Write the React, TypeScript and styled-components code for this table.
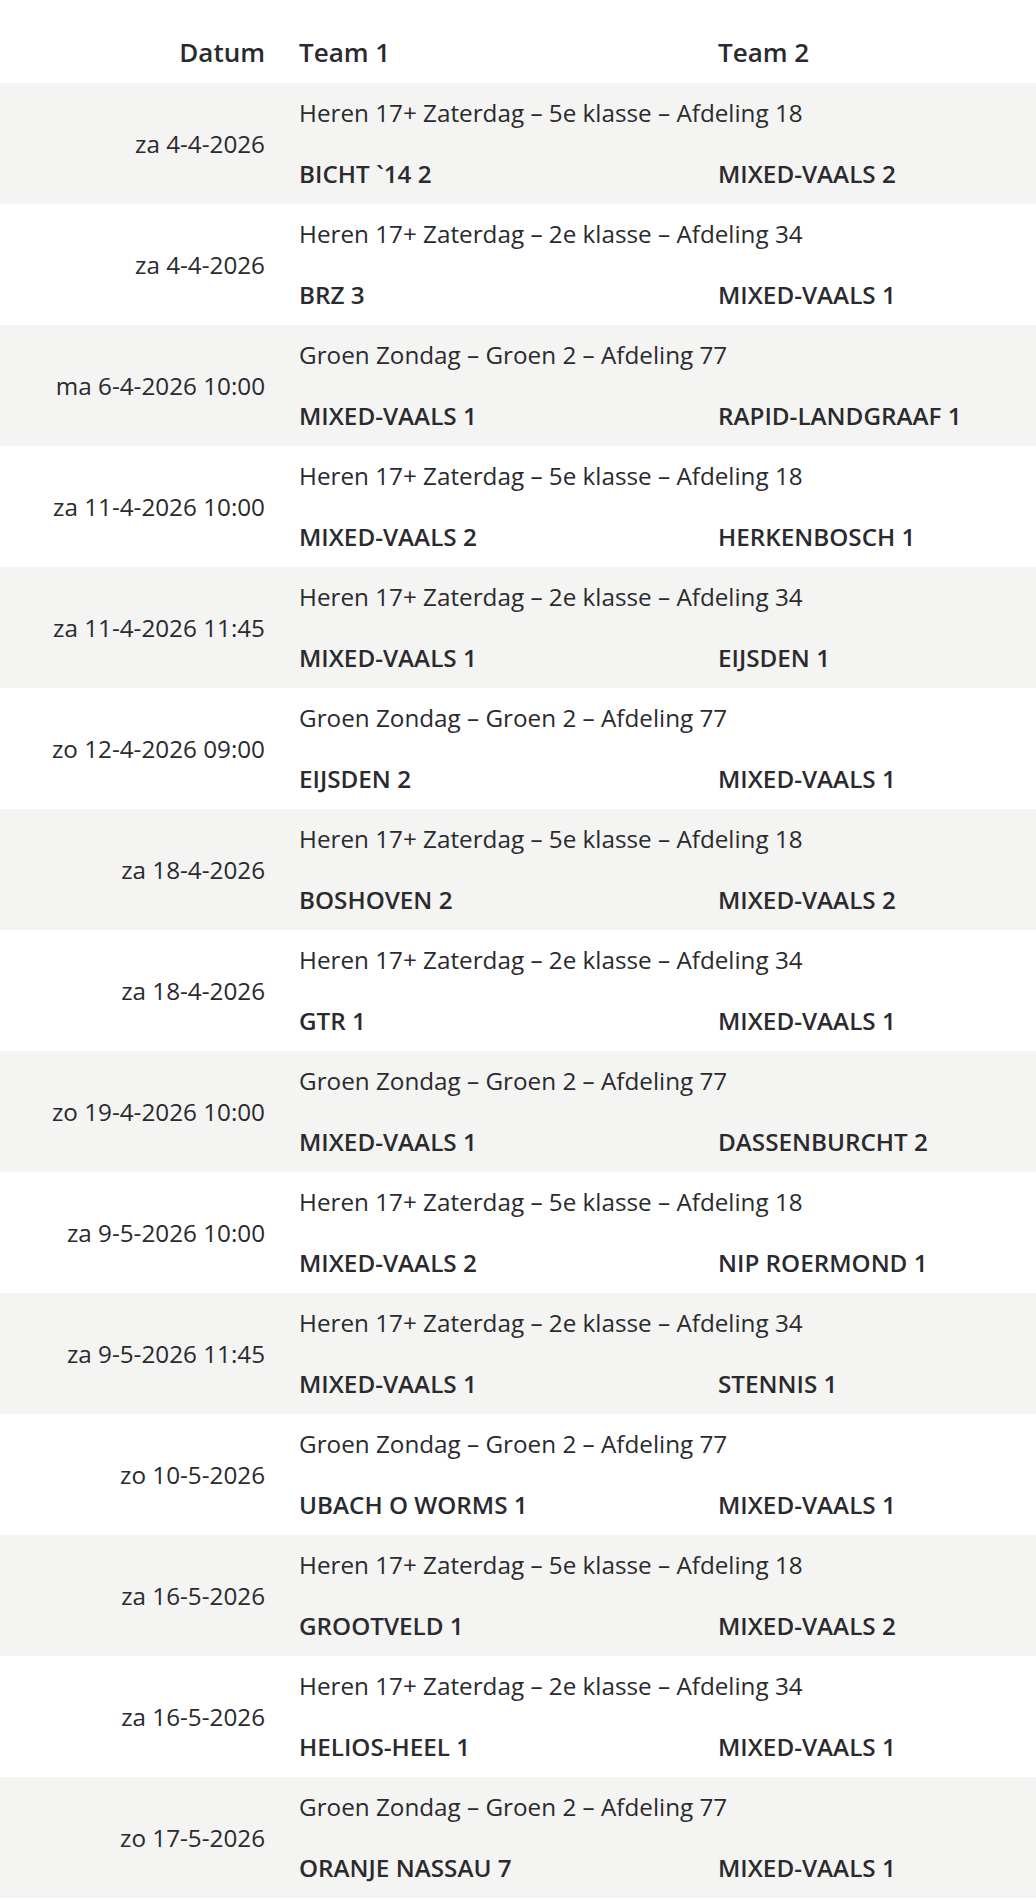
import React from "react";
import styled, { createGlobalStyle } from "styled-components";

const Global = createGlobalStyle`
  html, body { margin: 0; padding: 0; background: #ffffff; }
  body { font-family: "Open Sans", "Noto Sans", sans-serif; color: #2a2a2f; }
`;

type Match = { date: string; cat: string; t1: string; t2: string };

const H18 = "Heren 17+ Zaterdag – 5e klasse – Afdeling 18";
const H34 = "Heren 17+ Zaterdag – 2e klasse – Afdeling 34";
const G77 = "Groen Zondag – Groen 2 – Afdeling 77";

const matches: Match[] = [
  { date: "za 4-4-2026", cat: H18, t1: "BICHT `14 2", t2: "MIXED-VAALS 2" },
  { date: "za 4-4-2026", cat: H34, t1: "BRZ 3", t2: "MIXED-VAALS 1" },
  { date: "ma 6-4-2026 10:00", cat: G77, t1: "MIXED-VAALS 1", t2: "RAPID-LANDGRAAF 1" },
  { date: "za 11-4-2026 10:00", cat: H18, t1: "MIXED-VAALS 2", t2: "HERKENBOSCH 1" },
  { date: "za 11-4-2026 11:45", cat: H34, t1: "MIXED-VAALS 1", t2: "EIJSDEN 1" },
  { date: "zo 12-4-2026 09:00", cat: G77, t1: "EIJSDEN 2", t2: "MIXED-VAALS 1" },
  { date: "za 18-4-2026", cat: H18, t1: "BOSHOVEN 2", t2: "MIXED-VAALS 2" },
  { date: "za 18-4-2026", cat: H34, t1: "GTR 1", t2: "MIXED-VAALS 1" },
  { date: "zo 19-4-2026 10:00", cat: G77, t1: "MIXED-VAALS 1", t2: "DASSENBURCHT 2" },
  { date: "za 9-5-2026 10:00", cat: H18, t1: "MIXED-VAALS 2", t2: "NIP ROERMOND 1" },
  { date: "za 9-5-2026 11:45", cat: H34, t1: "MIXED-VAALS 1", t2: "STENNIS 1" },
  { date: "zo 10-5-2026", cat: G77, t1: "UBACH O WORMS 1", t2: "MIXED-VAALS 1" },
  { date: "za 16-5-2026", cat: H18, t1: "GROOTVELD 1", t2: "MIXED-VAALS 2" },
  { date: "za 16-5-2026", cat: H34, t1: "HELIOS-HEEL 1", t2: "MIXED-VAALS 1" },
  { date: "zo 17-5-2026", cat: G77, t1: "ORANJE NASSAU 7", t2: "MIXED-VAALS 1" },
];

const Table = styled.div`
  width: 1036px;
  display: flex;
  flex-direction: column;
`;

const HeaderRow = styled.div`
  display: grid;
  grid-template-columns: 299px 419px 1fr;
  height: 83px;
  align-items: end;
  box-sizing: border-box;
  padding-bottom: 12px;
`;

const HeadCell = styled.div<{ $right?: boolean }>`
  font-size: 26px;
  line-height: 38px;
  font-weight: 600;
  text-align: ${(p) => (p.$right ? "right" : "left")};
  padding-right: ${(p) => (p.$right ? "34px" : "0")};
`;

const Row = styled.div<{ $odd: boolean }>`
  display: grid;
  grid-template-columns: 299px 419px 1fr;
  grid-template-rows: 36px 36px;
  row-gap: 25px;
  height: 121px;
  box-sizing: border-box;
  padding: 12px 0 12px;
  background: ${(p) => (p.$odd ? "#f4f4f2" : "#ffffff")};
`;

const DateCell = styled.div`
  grid-row: 1 / span 2;
  grid-column: 1;
  align-self: center;
  text-align: right;
  padding-right: 34px;
  font-size: 24.25px;
  line-height: 36px;
`;

const Category = styled.div`
  grid-row: 1;
  grid-column: 2 / span 2;
  font-size: 24.25px;
  line-height: 36px;
  white-space: nowrap;
`;

const Team = styled.div<{ $col: number }>`
  grid-row: 2;
  grid-column: ${(p) => p.$col};
  font-size: 24.25px;
  line-height: 36px;
  font-weight: 600;
  white-space: nowrap;
`;

export default function App() {
  return (
    <>
      <Global />
      <Table>
        <HeaderRow>
          <HeadCell $right>Datum</HeadCell>
          <HeadCell>Team 1</HeadCell>
          <HeadCell>Team 2</HeadCell>
        </HeaderRow>
        {matches.map((m, i) => (
          <Row key={i} $odd={i % 2 === 0}>
            <DateCell>{m.date}</DateCell>
            <Category>{m.cat}</Category>
            <Team $col={2}>{m.t1}</Team>
            <Team $col={3}>{m.t2}</Team>
          </Row>
        ))}
      </Table>
    </>
  );
}
